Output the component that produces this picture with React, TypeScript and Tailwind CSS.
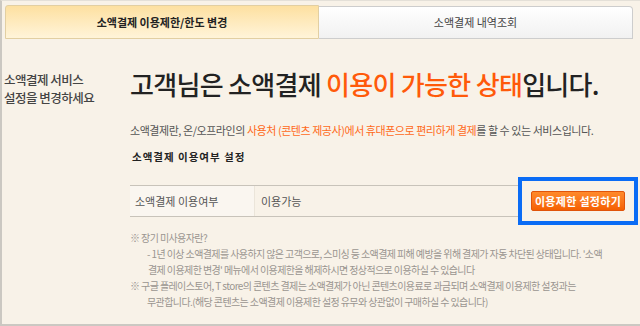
const font = "font-['Noto_Sans_CJK_KR','Noto_Sans',sans-serif]";

const Tabs = () => (
  <div className="flex h-[34px] pl-[3px] pr-[7px]">
    <div className="flex w-[314px] items-center justify-center rounded-tl-[3px] border border-[#e2cfa2] bg-gradient-to-b from-[#fde0a0] to-[#fff4d9] text-[11px] font-bold text-[#222]">
      소액결제 이용제한/한도 변경
    </div>
    <div className="mt-[1px] flex flex-1 items-center justify-center rounded-tr-[4px] border border-l-0 border-[#cdcdcd] bg-gradient-to-b from-white to-[#f1f1f1] text-[11px] text-[#444]">
      소액결제 내역조회
    </div>
  </div>
);

const App = () => {
  return (
    <div className={`${font} h-[326px] w-[640px] overflow-hidden border-t border-l-2 border-b-2 border-t-[#e4e0d8] border-l-[#cbc8c2] border-b-[#cbc8c2] bg-[#f8f2e8] pt-[4px]`}>
      <Tabs />
      <div className="flex">
        <div className="w-[128px] pl-[2px] pt-[32px] text-[12.5px] font-medium leading-[18px] tracking-[-0.5px] text-[#444]">
          소액결제 서비스
          <br />
          설정을 변경하세요
        </div>
        <div className="flex-1">
          <h1 className="mt-[25px] h-[40px] text-[26px] font-medium leading-[40px] tracking-[-0.7px] text-[#222]">
            고객님은 소액결제 <span className="text-[#ff5a0a]">이용이 가능한 상태</span>입니다.
          </h1>
          <p className="mt-[18px] text-[11px] leading-[16px] tracking-[-0.45px] text-[#555]">
            소액결제란, 온/오프라인의 <span className="text-[#ff6a1a]">사용처 (콘텐츠 제공사)에서 휴대폰으로 편리하게 결제</span>를 할 수 있는 서비스입니다.
          </p>
          <h2 className="mt-[11px] pl-[2px] text-[10.5px] font-bold leading-[16px] tracking-[1px] text-[#222]">
            소액결제 이용여부 설정
          </h2>
          <div className="mt-[12px] flex items-center">
            <div className="flex h-[32px] w-[390px] border-y border-[#c8c3ba] text-[11px] text-[#555]">
              <div className="flex w-[125px] items-center border-r border-[#ebe5da] bg-[#faf6f0] pl-[5px]">소액결제 이용여부</div>
              <div className="flex items-center pl-[6px]">이용가능</div>
            </div>
            <div className="ml-[-2px] flex h-[48px] w-[120px] items-center justify-center border-[4px] border-[#0a6cf5]">
              <button className="h-[20px] w-[94px] rounded-[2px] border border-[#e0540a] bg-gradient-to-b from-[#ff8a2a] to-[#f56000] text-[11px] font-bold tracking-[0.3px] text-white">
                이용제한 설정하기
              </button>
            </div>
          </div>
          <div className="mt-[5px] text-[10px] leading-[16px] tracking-[-0.6px] text-[#9a9590]">
            <p>※ 장기 미사용자란?</p>
            <p className="pl-[17px]">- 1년 이상 소액결제를 사용하지 않은 고객으로, 스미싱 등 소액결제 피해 예방을 위해 결제가 자동 차단된 상태입니다. '소액</p>
            <p className="pl-[18px]">결제 이용제한 변경' 메뉴에서 이용제한을 해제하시면 정상적으로 이용하실 수 있습니다</p>
            <p>※ 구글 플레이스토어, T store의 콘텐츠 결제는 소액결제가 아닌 콘텐츠이용료로 과금되며 소액결제 이용제한 설정과는</p>
            <p className="pl-[17px]">무관합니다.(해당 콘텐츠는 소액결제 이용제한 설정 유무와 상관없이 구매하실 수 있습니다)</p>
          </div>
        </div>
      </div>
    </div>
  );
};

export default App;
